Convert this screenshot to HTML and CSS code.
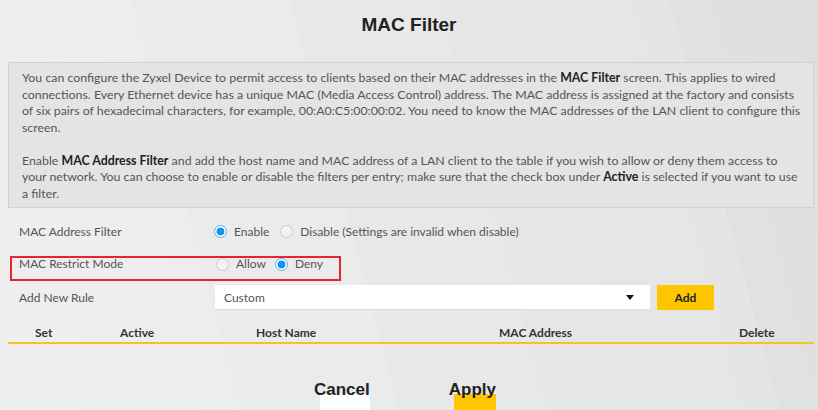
FILE: index.html
```html
<!DOCTYPE html>
<html lang="en">
<head>
<meta charset="utf-8">
<title>MAC Filter</title>
<link rel="stylesheet" href="styles.css">
</head>
<body>
<div class="page">
  <h1 class="title">MAC Filter</h1>
  <div class="info">
    <p>You can configure the Zyxel Device to permit access to clients based on their MAC addresses in the <b>MAC Filter</b> screen. This applies to wired<br>connections. Every Ethernet device has a unique MAC (Media Access Control) address. The MAC address is assigned at the factory and consists<br>of six pairs of hexadecimal characters, for example, 00:A0:C5:00:00:02. You need to know the MAC addresses of the LAN client to configure this<br>screen.</p>
    <p>Enable <b>MAC Address Filter</b> and add the host name and MAC address of a LAN client to the table if you wish to allow or deny them access to<br>your network. You can choose to enable or disable the filters per entry; make sure that the check box under <b>Active</b> is selected if you want to use<br>a filter.</p>
  </div>

  <div class="row row-filter">
    <span class="label">MAC Address Filter</span>
    <span class="opts">
      <span class="opt"><span class="radio on"></span>Enable</span>
      <span class="opt"><span class="radio"></span>Disable (Settings are invalid when disable)</span>
    </span>
  </div>

  <div class="restrict">
    <span class="label">MAC Restrict Mode</span>
    <span class="opts">
      <span class="opt"><span class="radio"></span>Allow</span>
      <span class="opt"><span class="radio on"></span>Deny</span>
    </span>
  </div>

  <div class="row row-rule">
    <span class="label">Add New Rule</span>
    <div class="select"><span>Custom</span><span class="caret"></span></div>
    <button class="add">Add</button>
  </div>

  <div class="thead">
    <span class="c-set">Set</span>
    <span class="c-active">Active</span>
    <span class="c-host">Host Name</span>
    <span class="c-mac">MAC Address</span>
    <span class="c-del">Delete</span>
  </div>

  <div class="actions">
    <span class="btn cancel">Cancel</span>
    <span class="btn apply">Apply</span>
  </div>
</div>
</body>
</html>
```

FILE: styles.css
```css
html, body {
  margin: 0;
  padding: 0;
}
body {
  width: 818px;
  height: 410px;
  overflow: hidden;
  font-family: "Lato", "Open Sans", "Liberation Sans", sans-serif;
  color: #555;
  background:
    linear-gradient(75deg,
      #efefef 0%, #ededed 26%,
      #ebebeb 26%, #ebebeb 43%,
      #e8e8e8 43%, #e8e8e8 59%,
      #e6e6e6 59%, #e5e5e5 84%,
      #e1e1e1 84%, #dedede 100%);
}
.page {
  height: 410px;
  display: flex;
  flex-direction: column;
}
.page > * {
  flex: none;
}
.title {
  margin: 0;
  height: 62px;
  box-sizing: border-box;
  padding-top: 13px;
  text-align: center;
  font-family: "Liberation Sans", sans-serif;
  font-size: 19px;
  font-weight: bold;
  color: #222;
  line-height: 24px;
}
.info {
  margin: 0 4px 0 8px;
  border: 1px solid #d2d2d2;
  background: #e4e4e4;
  padding: 7px 8px 5px 13px;
  font-size: 12.35px;
  line-height: 16.5px;
  color: #555;
  white-space: nowrap;
  overflow: hidden;
}
.info p {
  margin: 0;
}
.info p + p {
  margin-top: 16.5px;
}
.info b {
  color: #222;
}
.label {
  font-size: 12px;
  color: #555;
  width: 195px;
  flex: none;
}
.opts {
  display: flex;
  gap: 11px;
  font-size: 12px;
  color: #555;
}
.opt {
  display: flex;
  align-items: center;
  gap: 7px;
}
.radio {
  width: 13px;
  height: 13px;
  border-radius: 50%;
  box-sizing: border-box;
  border: 1px solid #c9c9c9;
  background: #f3f3f3;
  flex: none;
}
.radio.on {
  border: 1.5px solid #52aef0;
  background: radial-gradient(circle, #1592ec 0 3.6px, #ffffff 4.3px);
}
.row {
  display: flex;
  align-items: center;
  padding-left: 19px;
}
.row-filter {
  margin-top: 10px;
  height: 26px;
}
.restrict {
  margin: 12px 0 0 10px;
  width: 331px;
  box-sizing: border-box;
  border: 2px solid #e5242d;
  padding: 0 0 9px 7px;
  display: flex;
  align-items: center;
  height: 25px;
  line-height: 12px;
}
.restrict .label {
  width: 197px;
}
.restrict .opts {
  gap: 9px;
}
.row-rule {
  margin-top: 4px;
  height: 25px;
}
.row-rule .label {
  width: 196px;
}
.select {
  width: 435px;
  height: 25px;
  box-sizing: border-box;
  background: #fff;
  border-bottom: 1px solid #dcdcdc;
  display: flex;
  align-items: center;
  justify-content: space-between;
  padding: 0 16px 0 9px;
  font-size: 12px;
  color: #555;
}
.caret {
  width: 0;
  height: 0;
  border-left: 4px solid transparent;
  border-right: 4px solid transparent;
  border-top: 5px solid #111;
}
.add {
  margin-left: 7px;
  width: 57px;
  height: 25px;
  border: 0;
  background: #ffc600;
  font-family: "Lato", sans-serif;
  font-weight: bold;
  font-size: 12px;
  color: #222;
  padding: 0;
}
.thead {
  margin: 12px 4px 0 8px;
  height: 22px;
  box-sizing: border-box;
  border-bottom: 2px solid #f2c42a;
  display: flex;
  align-items: center;
  font-size: 12px;
  font-weight: bold;
  color: #333;
}
.c-set { margin-left: 27px; width: 85px; }
.c-active { width: 136px; }
.c-host { width: 243px; }
.c-mac { width: 240px; }
.actions {
  margin-top: 36px;
  display: flex;
  padding-left: 314px;
  gap: 79px;
}
.btn {
  font-family: "Liberation Sans", sans-serif;
  font-weight: bold;
  font-size: 17px;
  color: #222;
  line-height: 20px;
  padding-bottom: 20px;
  background-repeat: no-repeat;
}
.cancel {
  background-image: linear-gradient(#fff, #fff);
  background-position: 6px 14px;
  background-size: 57px 30px;
}
.apply {
  background-image: linear-gradient(#ffc600, #ffc600);
  background-position: 5px 14px;
  background-size: 46px 30px;
}
```
